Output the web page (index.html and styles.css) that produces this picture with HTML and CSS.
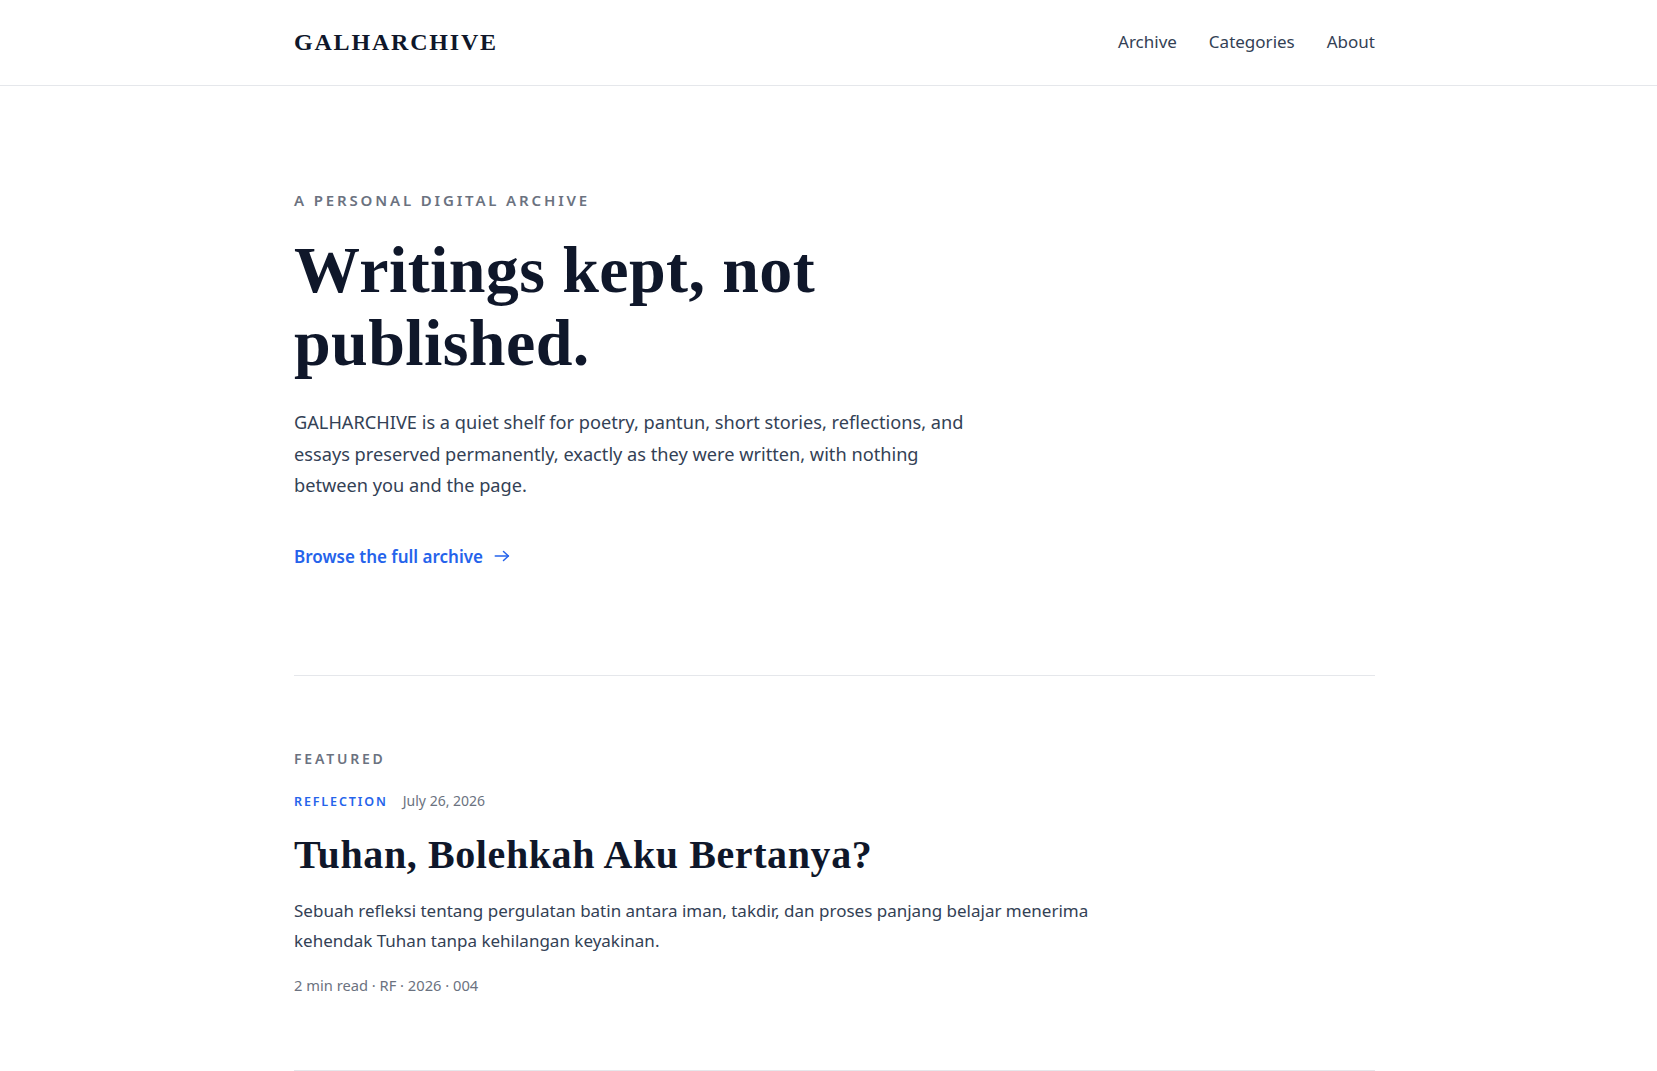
FILE: index.html
```html
<!DOCTYPE html>
<html lang="en">
<head>
<meta charset="utf-8">
<title>GALHARCHIVE</title>
<link rel="stylesheet" href="styles.css">
</head>
<body>
<header class="site-header">
  <div class="container header-inner">
    <a class="logo" href="#">GALHARCHIVE</a>
    <nav class="nav">
      <a href="#">Archive</a>
      <a href="#">Categories</a>
      <a href="#">About</a>
    </nav>
  </div>
</header>
<main class="container">
  <section class="hero">
    <p class="eyebrow">A Personal Digital Archive</p>
    <h1 class="hero-title">Writings kept, not published.</h1>
    <p class="hero-text">GALHARCHIVE is a quiet shelf for poetry, pantun, short stories, reflections, and essays preserved permanently, exactly as they were written, with nothing between you and the page.</p>
    <a class="cta" href="#">
      <span>Browse the full archive</span>
      <svg class="cta-arrow" width="18" height="18" viewBox="0 0 24 24" fill="none" stroke="currentColor" stroke-width="2" stroke-linecap="round" stroke-linejoin="round" aria-hidden="true">
        <path d="M3 12h17.5"/>
        <path d="M14 6l6.5 6-6.5 6"/>
      </svg>
    </a>
  </section>
  <section class="featured">
    <p class="section-label">Featured</p>
    <div class="post-meta-top">
      <span class="post-category">Reflection</span>
      <span class="post-date">July 26, 2026</span>
    </div>
    <h2 class="post-title">Tuhan, Bolehkah Aku Bertanya?</h2>
    <p class="post-excerpt">Sebuah refleksi tentang pergulatan batin antara iman, takdir, dan proses panjang belajar menerima kehendak Tuhan tanpa kehilangan keyakinan.</p>
    <p class="post-info">2 min read · RF · 2026 · 004</p>
  </section>
</main>
</body>
</html>
```

FILE: styles.css
```css
* {
  box-sizing: border-box;
}

html, body {
  margin: 0;
  padding: 0;
  background: #ffffff;
}

body {
  font-family: "Noto Sans", "Open Sans", sans-serif;
  color: #334155;
  -webkit-font-smoothing: antialiased;
}

a {
  text-decoration: none;
  color: inherit;
}

p, h1, h2 {
  margin: 0;
}

.container {
  max-width: 1093px;
  margin: 0 auto;
  padding-left: 12px;
}

/* Header */
.site-header {
  border-bottom: 1px solid #e5e7eb;
}

.header-inner {
  height: 85px;
  display: flex;
  align-items: center;
  justify-content: space-between;
}

.logo {
  font-family: "Liberation Serif", "Times New Roman", serif;
  font-weight: 700;
  font-size: 24px;
  letter-spacing: 0.075em;
  color: #0f172a;
  margin-bottom: 1px;
}

.nav {
  display: flex;
  gap: 32px;
  margin-bottom: 2px;
}

.nav a {
  font-size: 17px;
  color: #334155;
}

/* Hero */
.hero {
  padding: 103px 0 106px;
}

.eyebrow {
  font-size: 15px;
  line-height: 22px;
  font-weight: 600;
  letter-spacing: 0.19em;
  text-transform: uppercase;
  color: #6b7280;
  margin-bottom: 22px;
}

.hero-title {
  font-family: "Liberation Serif", "Times New Roman", serif;
  font-weight: 700;
  font-size: 66px;
  line-height: 73px;
  letter-spacing: 0.006em;
  color: #0f172a;
  max-width: 720px;
}

.hero-text {
  margin-top: 28px;
  max-width: 680px;
  font-size: 18.2px;
  line-height: 31.5px;
  color: #334155;
}

.cta {
  margin-top: 42px;
  display: inline-flex;
  align-items: center;
  gap: 10px;
  font-size: 17px;
  line-height: 25.5px;
  font-weight: 600;
  color: #2563eb;
}

.cta-arrow {
  display: block;
}

/* Featured */
.featured {
  border-top: 1px solid #e5e7eb;
  border-bottom: 1px solid #e5e7eb;
  padding: 72px 0 74px;
}

.section-label {
  font-size: 14px;
  line-height: 21px;
  font-weight: 600;
  letter-spacing: 0.2em;
  text-transform: uppercase;
  color: #6b7280;
  margin-bottom: 22px;
}

.post-meta-top {
  display: flex;
  align-items: baseline;
  gap: 15px;
  line-height: 20px;
}

.post-category {
  font-size: 12.5px;
  font-weight: 600;
  letter-spacing: 0.15em;
  text-transform: uppercase;
  color: #2563eb;
}

.post-date {
  font-size: 14px;
  color: #6b7280;
}

.post-title {
  margin-top: 19px;
  font-family: "Liberation Serif", "Times New Roman", serif;
  font-weight: 700;
  font-size: 40px;
  line-height: 48px;
  letter-spacing: 0.015em;
  color: #0f172a;
}

.post-excerpt {
  margin-top: 17px;
  max-width: 800px;
  font-size: 17px;
  line-height: 30px;
  color: #334155;
}

.post-info {
  margin-top: 19px;
  font-size: 14.7px;
  line-height: 21px;
  color: #6b7280;
}
```
